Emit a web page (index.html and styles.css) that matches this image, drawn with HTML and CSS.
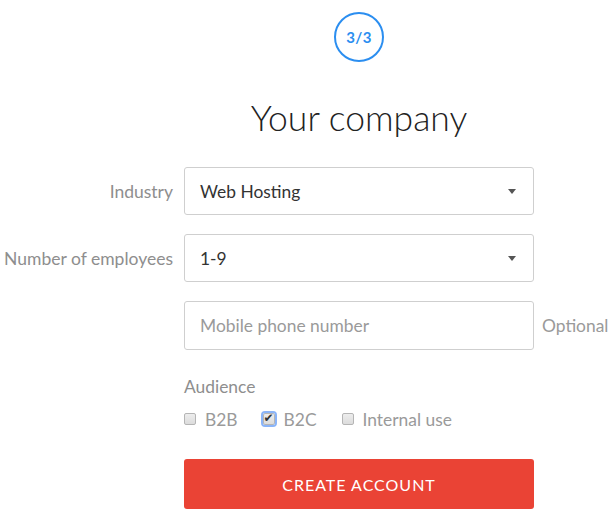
FILE: index.html
```html
<!DOCTYPE html>
<html lang="en">
<head>
<meta charset="utf-8">
<title>Your company</title>
<link rel="stylesheet" href="styles.css">
</head>
<body>
<form class="form">
  <div class="step-wrap"><div class="step">3/3</div></div>
  <h1 class="title">Your company</h1>

  <label class="label" for="industry">Industry</label>
  <div class="select" id="industry">
    <span class="select-value">Web Hosting</span>
    <span class="caret"></span>
  </div>

  <label class="label" for="employees">Number of employees</label>
  <div class="select" id="employees">
    <span class="select-value">1-9</span>
    <span class="caret"></span>
  </div>

  <input class="input" type="text" placeholder="Mobile phone number">
  <span class="optional">Optional</span>

  <div class="audience">
    <div class="audience-label">Audience</div>
    <div class="checks">
      <label class="check"><input type="checkbox"> B2B</label>
      <label class="check"><input type="checkbox" class="focused" checked> B2C</label>
      <label class="check"><input type="checkbox"> Internal use</label>
    </div>
  </div>

  <button type="button" class="submit">CREATE ACCOUNT</button>
</form>
</body>
</html>
```

FILE: styles.css
```css
html, body {
  margin: 0;
  padding: 0;
  background: #fff;
}
body {
  font-family: Lato, "Open Sans", sans-serif;
}
.form {
  display: grid;
  grid-template-columns: 173px 350px auto;
  column-gap: 11px;
  row-gap: 19px;
  align-items: center;
  padding-top: 12px;
}
.step-wrap {
  grid-column: 2;
  display: flex;
  justify-content: center;
}
.step {
  width: 46px;
  height: 46px;
  border: 2px solid #2b8ef0;
  border-radius: 50%;
  display: flex;
  align-items: center;
  justify-content: center;
  color: #2b8ef0;
  font-weight: 700;
  font-size: 15px;
  letter-spacing: 0.3px;
}
.title {
  grid-column: 2;
  margin: 15px 0 8px;
  text-align: center;
  font-weight: 300;
  font-size: 35.5px;
  line-height: 44px;
  color: #222;
}
.label {
  grid-column: 1;
  text-align: right;
  font-size: 17.5px;
  color: #8e8e8e;
  white-space: nowrap;
}
.select, .input {
  grid-column: 2;
  box-sizing: border-box;
  height: 48px;
  border: 1px solid #cfcfcf;
  border-radius: 3px;
  background: #fff;
  font-family: inherit;
  font-size: 17.4px;
}
.select {
  display: flex;
  align-items: center;
  justify-content: space-between;
  padding: 0 17px 0 15px;
  color: #333;
}
.caret {
  width: 0;
  height: 0;
  border-left: 4px solid transparent;
  border-right: 4px solid transparent;
  border-top: 5px solid #555;
}
.input {
  width: 100%;
  padding: 0 15px;
  height: 49px;
  outline: none;
  color: #333;
}
.input::placeholder {
  color: #9a9a9a;
}
.optional {
  grid-column: 3;
  margin-left: -3px;
  font-size: 17.4px;
  color: #9a9a9a;
}
.audience {
  grid-column: 2;
  margin-top: 8px;
}
.audience-label {
  font-size: 17.4px;
  color: #8e8e8e;
  line-height: 20px;
}
.checks {
  display: flex;
  gap: 25px;
  margin-top: 12px;
}
.check {
  display: flex;
  align-items: center;
  gap: 8px;
  font-size: 17.4px;
  color: #9a9a9a;
}
.check input {
  appearance: none;
  -webkit-appearance: none;
  box-sizing: border-box;
  margin: 0 1px 0 0;
  width: 12px;
  height: 12px;
  border: 1px solid #b5b5b5;
  border-radius: 2px;
  background: linear-gradient(#ededed, #dcdcdc);
  position: relative;
  top: -1px;
}
.check input:checked::after {
  content: "\2714";
  position: absolute;
  left: 0;
  top: -3px;
  font-size: 12px;
  line-height: 14px;
  font-family: "DejaVu Sans", sans-serif;
  color: #333;
}
.check input.focused {
  outline: 2px solid #8ab4f8;
  outline-offset: 0;
}
.submit {
  grid-column: 2;
  margin-top: 10px;
  height: 50px;
  border: none;
  border-radius: 3px;
  background: #ea4335;
  color: #fff;
  font-family: inherit;
  font-size: 16px;
  letter-spacing: 1px;
}
```
